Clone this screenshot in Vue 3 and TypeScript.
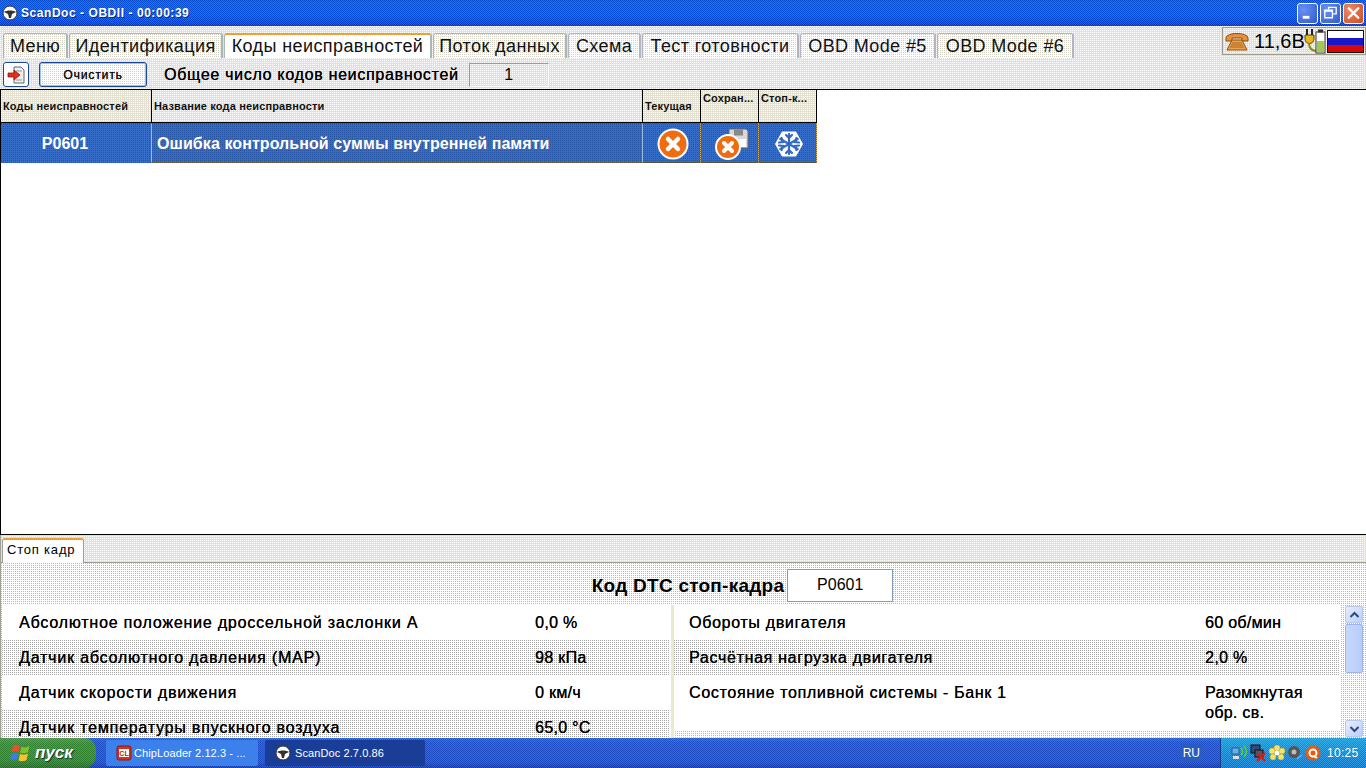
<script setup lang="ts">
type Param = { name: string; value: string }

const tabs = ['Меню', 'Идентификация', 'Коды неисправностей', 'Поток данных', 'Схема', 'Тест готовности', 'OBD Mode #5', 'OBD Mode #6']
const tabWidths = [65, 154, 208, 134, 73, 157, 136, 137]

const leftParams: Param[] = [
  { name: 'Абсолютное положение дроссельной заслонки А', value: '0,0 %' },
  { name: 'Датчик абсолютного давления (MAP)', value: '98 кПа' },
  { name: 'Датчик скорости движения', value: '0 км/ч' },
  { name: 'Датчик температуры впускного воздуха', value: '65,0 °C' }
]
const rightParams: Param[] = [
  { name: 'Обороты двигателя', value: '60 об/мин' },
  { name: 'Расчётная нагрузка двигателя', value: '2,0 %' },
  { name: 'Состояние топливной системы - Банк 1', value: 'Разомкнутая обр. св.' }
]
</script>

<template>
  <div class="screen">
    <header class="titlebar">
      <div class="title">
        <svg class="wheel" width="16" height="16" viewBox="0 0 16 16">
          <circle cx="8" cy="8" r="7" fill="#fff" stroke="#333" />
          <path d="M2 7 C5 5 11 5 14 7 L10 9 L9 13 H7 L6 9 Z" fill="#333" />
        </svg>
        <span>ScanDoc - OBDII - 00:00:39</span>
      </div>
      <div class="winbtns">
        <span class="winbtn"><svg width="20" height="20" viewBox="0 0 20 20"><rect x="5" y="13" width="7" height="3" fill="#fff" /></svg></span>
        <span class="winbtn"><svg width="20" height="20" viewBox="0 0 20 20"><path d="M8 6V4h8v7h-3M4 7h8v8H4zM4 8h8" fill="none" stroke="#fff" stroke-width="1.4" /></svg></span>
        <span class="winbtn close"><svg width="20" height="20" viewBox="0 0 20 20"><path d="M5 5l10 10M15 5L5 15" stroke="#fff" stroke-width="2.6" stroke-linecap="round" /></svg></span>
      </div>
    </header>

    <main class="window tan">
      <div class="tabrow">
        <nav class="tabs">
          <div
            v-for="(tab, i) in tabs"
            :key="tab"
            class="tab"
            :class="{ active: i === 2, grey: i >= 4 }"
            :style="{ width: tabWidths[i] + 'px' }"
          >{{ tab }}</div>
        </nav>
        <div class="status">
          <svg width="24" height="20" viewBox="0 0 24 20">
            <path d="M1 7C1 1 23 1 23 7v3h-6V7H7v3H1Z" fill="#e8923a" stroke="#8a4f10" />
            <path d="M7 9h10l5 10H2Z" fill="#f0a24a" stroke="#8a4f10" />
            <path d="M7 12h10M6 14h12M5 16h14" stroke="#a8641c" />
          </svg>
          <span class="volt">11,6В</span>
          <svg class="plug" width="22" height="26" viewBox="0 0 22 26">
            <path d="M3 1v6M8 1v6" stroke="#222" stroke-width="2" />
            <path d="M1 7h9v4a4 4 0 0 1-9 0Z" fill="#e8b820" stroke="#5a4500" />
            <path d="M5 15c0 6 3 8 8 8" fill="none" stroke="#8a8a10" stroke-width="2" />
            <rect x="12" y="4" width="9" height="21" fill="#fff" stroke="#333" />
            <rect x="14" y="1.500" width="5" height="3" fill="#333" />
            <rect x="13" y="13" width="7" height="11" fill="#9ccc4a" />
          </svg>
          <div class="flag"><i class="w"></i><i class="b"></i><i class="r"></i></div>
        </div>
      </div>

      <div class="toolbar">
        <button class="iconbtn">
          <svg width="20" height="20" viewBox="0 0 20 20">
            <path d="M8 2h7l3 3v13H8Z" fill="#eee" stroke="#666" />
            <path d="M10 6h6M10 15h6" stroke="#999" />
            <path d="M2 8h6V5l6 5-6 5v-3H2Z" fill="#e0301e" stroke="#801008" stroke-width=".7" />
          </svg>
        </button>
        <button class="clear">Очистить</button>
        <span class="count-label">Общее число кодов неисправностей</span>
        <span class="count">1</span>
      </div>

      <section class="table-area">
        <div class="dtc-table">
          <div class="th tan">Коды неисправностей</div>
          <div class="th tan">Название кода неисправности</div>
          <div class="th tan">Текущая</div>
          <div class="th tan top">Сохран...</div>
          <div class="th tan top">Стоп-к...</div>

          <div class="td sel center code">P0601</div>
          <div class="td sel name">Ошибка контрольной суммы внутренней памяти</div>
          <div class="td sel center dotted">
            <svg width="32" height="32" viewBox="0 0 32 32">
              <circle cx="16" cy="16" r="14.500" fill="#ef6c10" stroke="#fff" stroke-width="2" />
              <path d="M11 11l10 10M21 11L11 21" stroke="#fff" stroke-width="4.500" stroke-linecap="round" />
            </svg>
          </div>
          <div class="td sel center dotted save">
            <svg width="34" height="32" viewBox="0 0 34 32">
              <path d="M14 1h17l2 2v17H14Z" fill="#d8d8d8" stroke="#666" />
              <rect x="19" y="1.500" width="9" height="6" fill="#888" />
              <rect x="18" y="11" width="13" height="8" fill="#fff" />
              <circle cx="13" cy="19" r="12" fill="#ef6c10" stroke="#fff" stroke-width="2" />
              <path d="M9 15l8 8M17 15l-8 8" stroke="#fff" stroke-width="4" stroke-linecap="round" />
            </svg>
          </div>
          <div class="td sel center dotted">
            <svg width="30" height="28" viewBox="0 0 30 28">
              <path d="M8 1.500h14L29 14l-7 12.500H8L1 14Z" fill="#fff" />
              <g stroke="#316ac5" stroke-width="2.200" stroke-linecap="round" fill="none">
                <path d="M15 4v20M6.300 9l17.400 10M23.700 9L6.300 19" />
                <path d="M12 5l3 3 3-3M12 23l3-3 3 3M5 12.500l4-.5-1.500-4M25 12.500l-4-.5 1.500-4M5 15.500l4 .5-1.500 4M25 15.500l-4 .5 1.500 4" />
              </g>
            </svg>
          </div>
        </div>
      </section>

      <div class="bottom-tabs">
        <div class="stop-tab">Стоп кадр</div>
      </div>

      <section class="panel">
        <div class="dtc-line">
          <span>Код DTC стоп-кадра</span>
          <span class="dtc-box">P0601</span>
        </div>
        <div class="params">
          <div class="col">
            <div v-for="(p, i) in leftParams" :key="p.name" class="param" :class="{ alt: i % 2 === 1 }">
              <span class="p-name">{{ p.name }}</span>
              <span class="p-val">{{ p.value }}</span>
            </div>
          </div>
          <div class="col right">
            <div v-for="(p, i) in rightParams" :key="p.name" class="param" :class="{ alt: i % 2 === 1 }">
              <span class="p-name">{{ p.name }}</span>
              <span class="p-val">{{ p.value }}</span>
            </div>
          </div>
          <div class="scrollbar">
            <span class="sb-btn"><svg width="11" height="8" viewBox="0 0 11 8"><path d="M1.500 6l4-4 4 4" fill="none" stroke="#2a4a80" stroke-width="2" /></svg></span>
            <span class="sb-thumb"></span>
            <span class="sb-btn end"><svg width="11" height="8" viewBox="0 0 11 8"><path d="M1.500 2l4 4 4-4" fill="none" stroke="#2a4a80" stroke-width="2" /></svg></span>
          </div>
        </div>
      </section>
    </main>

    <footer class="taskbar">
      <div class="start">
        <svg width="22" height="20" viewBox="0 0 22 20">
          <path d="M3 3c3-2 5-1 7 0l-1.500 6c-2-1-4-1-7 0Z" fill="#e8502a" />
          <path d="M11.500 3.500c3 1.500 5 1 8-.5l-1.500 6c-3 1.500-5 1.500-8 .5Z" fill="#7cc230" />
          <path d="M1.500 10.500c3-1 5-1 7 0L7 17c-2-1-4-1-7 0Z" fill="#3a7ce8" />
          <path d="M10 11c3 1 5 1 8-.5L16.500 17c-3 1.500-5 1.500-8 .5Z" fill="#f4c430" />
        </svg>
        <span>пуск</span>
      </div>
      <div class="task">
        <svg width="16" height="18" viewBox="0 0 16 18">
          <rect x="1" y="2" width="14" height="14" rx="2" fill="#d83020" stroke="#901808" />
          <rect x="3" y="5" width="10" height="8" fill="#fff" />
          <text x="8" y="12" text-anchor="middle" class="cl">CL</text>
        </svg>
        <span>ChipLoader 2.12.3 - ...</span>
      </div>
      <div class="task current">
        <svg width="16" height="16" viewBox="0 0 16 16">
          <circle cx="8" cy="8" r="7" fill="#fff" stroke="#333" />
          <path d="M2 7 C5 5 11 5 14 7 L10 9 L9 13 H7 L6 9 Z" fill="#333" />
        </svg>
        <span>ScanDoc 2.7.0.86</span>
      </div>
      <span class="lang">RU</span>
      <div class="tray">
        <svg width="16" height="16" viewBox="0 0 16 16">
          <rect x="1" y="3" width="7" height="6" fill="#6ab0e8" stroke="#2a5a90" />
          <rect x="2" y="11" width="6" height="3" fill="#ddd" />
          <path d="M10 3c2 2 2 5 0 7M13 1c3 3 3 8 0 11" fill="none" stroke="#5fd030" stroke-width="1.500" />
        </svg>
        <svg width="18" height="18" viewBox="0 0 18 18">
          <rect x="2" y="1" width="9" height="8" fill="#334a80" stroke="#111" />
          <rect x="6" y="6" width="8" height="7" fill="#556" stroke="#111" />
          <path d="M8 9l8 8M16 9l-8 8" stroke="#e01818" stroke-width="2.200" />
        </svg>
        <svg width="16" height="16" viewBox="0 0 16 16">
          <g fill="#f6e26a" stroke="#c8a020" stroke-width=".5">
            <circle cx="8" cy="3" r="3" /><circle cx="13" cy="6" r="3" /><circle cx="12" cy="12" r="3" />
            <circle cx="4" cy="12" r="3" /><circle cx="3" cy="6" r="3" />
          </g>
          <circle cx="8" cy="8" r="2.500" fill="#fff" />
        </svg>
        <svg width="16" height="16" viewBox="0 0 16 16">
          <circle cx="7" cy="7" r="6" fill="#555" />
          <circle cx="7" cy="7" r="2.500" fill="#bbb" />
          <path d="M10 14l5-4" stroke="#88a0e8" stroke-width="1.500" />
        </svg>
        <svg width="16" height="16" viewBox="0 0 16 16">
          <circle cx="8" cy="8" r="7.500" fill="#e85a10" />
          <circle cx="8" cy="8" r="3.500" fill="none" stroke="#fff" stroke-width="2" />
          <path d="M9 11l3 2" stroke="#fff" stroke-width="2" />
        </svg>
        <span class="clock">10:25</span>
      </div>
    </footer>
  </div>
</template>

<style>
html, body {
  margin: 0;
  overflow: hidden;
}
</style>

<style scoped>
.screen {
  width: 1366px;
  height: 768px;
  display: flex;
  flex-direction: column;
  overflow: hidden;
  font-family: "Liberation Sans", Arial, sans-serif;
  color: #000;
}

/* the reference is a 256 colour capture, so surfaces are dithered: one dot per 2x2 tile */
.tan,
.tab,
.clear,
.panel,
.param.alt,
.sel {
  background-color: var(--dot);
  background-image:
    linear-gradient(90deg, transparent 50%, var(--fill) 50%),
    linear-gradient(transparent 50%, var(--fill) 50%);
  background-size: 2px 2px;
}

.tan {
  --dot: #fff;
  --fill: #e4e1d2;
}

.titlebar {
  height: 26px;
  flex: none;
  display: flex;
  justify-content: space-between;
  align-items: center;
  padding: 0 2px;
  box-sizing: border-box;
  background:
    repeating-conic-gradient(rgba(255, 255, 255, 0.13) 0 25%, rgba(0, 0, 40, 0.1) 0 50%) 0 0 / 2px 2px,
    linear-gradient(#0a50d8 0, #0a5ae8 8%, #0458ee 60%, #0444dc 92%, #0038b8 100%);
}

.title {
  display: flex;
  align-items: center;
  gap: 3px;
  color: #fff;
  font-size: 12px;
  font-weight: bold;
  letter-spacing: 0.55px;
  text-shadow: 1px 1px 0 #0a2a90;
}

.wheel {
  flex: none;
}

.winbtns {
  display: flex;
  gap: 2px;
}

.winbtn {
  width: 21px;
  height: 21px;
  box-sizing: border-box;
  border: 1px solid #fff;
  border-radius: 3px;
  background: radial-gradient(circle at 30% 30%, #6a92f0, #2f58d0);
  display: flex;
  align-items: center;
  justify-content: center;
}

.winbtn.close {
  background: radial-gradient(circle at 30% 30%, #ee8a68, #d04a1c);
}

.window {
  flex: 1;
  min-height: 0;
  display: flex;
  flex-direction: column;
  overflow: hidden;
}

.tabrow {
  height: 34px;
  flex: none;
  display: flex;
  justify-content: space-between;
  padding: 1px 0 0 3px;
  box-sizing: border-box;
}

.tabs {
  display: flex;
  margin-top: 6px;
}

.tab {
  --dot: #d4d2c6;
  --fill: #fff;
  height: 25px;
  box-sizing: border-box;
  flex: none;
  margin-right: 1px;
  padding-top: 1px;
  border: 1px solid #a9b7b4;
  border-bottom: 0;
  border-right-width: 2px;
  border-radius: 3px 3px 0 0;
  font-size: 18px;
  line-height: 22px;
  letter-spacing: 0.4px;
  text-align: center;
  white-space: nowrap;
  color: #111;
}

.tab.grey {
  border-color: #b4b4c2;
}

.tab.active {
  background: #fff;
  border-top: 2px solid #f0a030;
  padding-top: 0;
}

.status {
  width: 144px;
  height: 28px;
  box-sizing: border-box;
  border: 1px solid #a09c8c;
  display: flex;
  align-items: center;
  padding-left: 2px;
}

.volt {
  font-size: 20px;
  margin-left: 5px;
  width: 52px;
  white-space: nowrap;
}

.plug {
  flex: none;
  margin-left: -2px;
  margin-right: 1px;
}

.flag {
  width: 37px;
  height: 23px;
  box-sizing: border-box;
  border: 1px solid #111;
  display: flex;
  flex-direction: column;
  flex: none;
}

.flag i {
  flex: 1;
}

.flag .w { background: #fff; }
.flag .b { background: #1818c8; }
.flag .r { background: #d80808; }

.toolbar {
  height: 29px;
  flex: none;
  display: flex;
  align-items: center;
  padding-left: 3px;
  box-sizing: border-box;
}

.iconbtn {
  width: 26px;
  height: 25px;
  padding: 0;
  box-sizing: border-box;
  border: 1px solid #1c4a90;
  border-radius: 3px;
  background: #fff;
  display: flex;
  align-items: center;
  justify-content: center;
}

.clear {
  --dot: #d4d2c4;
  --fill: #fff;
  width: 108px;
  height: 25px;
  margin-left: 10px;
  box-sizing: border-box;
  border: 1px solid #1c4a90;
  border-radius: 3px;
  box-shadow: inset 0 0 0 1px #9cc0ee;
  font: 12px "Liberation Sans", Arial, sans-serif;
  letter-spacing: 0.9px;
  color: #111;
  text-shadow: 0.3px 0 0 #111;
}

.count-label {
  margin-left: 17px;
  font-size: 16px;
  white-space: nowrap;
  letter-spacing: 0.7px;
  text-shadow: 0.2px 0 0 #111;
}

.count {
  width: 80px;
  height: 24px;
  margin-left: 10px;
  box-sizing: border-box;
  border: 1px solid #9c9a8c;
  border-right-color: #fff;
  border-bottom-color: #fff;
  text-align: center;
  font-size: 16px;
  line-height: 21px;
}

.table-area {
  height: 446px;
  flex: none;
  box-sizing: border-box;
  background: #fff;
  border-top: 1px solid #000;
  border-bottom: 1px solid #000;
  border-left: 1px solid #000;
}

.dtc-table {
  width: 816px;
  display: grid;
  grid-template-columns: 151px 491px 58px 58px 58px;
  grid-template-rows: 33px 40px;
}

.th {
  box-sizing: border-box;
  border-right: 1px solid #000;
  border-bottom: 1px solid #000;
  font-size: 11px;
  font-weight: bold;
  line-height: 33px;
  letter-spacing: 0.15px;
  padding-left: 2px;
  white-space: nowrap;
  overflow: hidden;
  color: #111;
}

.th.top {
  line-height: 14px;
  padding-top: 1px;
}

.td {
  box-sizing: border-box;
  height: 40px;
  padding-top: 1px;
  color: #fff;
  font-size: 16px;
  font-weight: bold;
  display: flex;
  align-items: center;
  border-right: 1px solid #9fb8dc;
  border-top: 1px dotted #553;
  border-bottom: 1px dotted #553;
}

.sel {
  --dot: #2654a4;
  --fill: #356cc8;
}

.center {
  justify-content: center;
}

.code {
  padding-right: 22px;
}

.name {
  padding-left: 5px;
  letter-spacing: 0.08px;
  white-space: nowrap;
}

.dotted {
  padding-left: 2px;
  border-right: 1px dotted #e0b060;
}

.save {
  padding-left: 5px;
}

.bottom-tabs {
  height: 28px;
  flex: none;
  display: flex;
  align-items: flex-end;
  padding-left: 1px;
  box-sizing: border-box;
  border-bottom: 1px solid #a0a096;
  border-left: 1px solid #a0a096;
}

.stop-tab {
  width: 82px;
  height: 25px;
  margin-bottom: -1px;
  box-sizing: border-box;
  background: #fff;
  border: 1px solid #a0a096;
  border-top: 2px solid #f0a030;
  border-bottom: 0;
  border-radius: 3px 3px 0 0;
  font-size: 13px;
  line-height: 20px;
  padding-left: 4px;
  letter-spacing: 0.8px;
}

.panel {
  --dot: #bcb9a6;
  --fill: #fff;
  flex: 1;
  min-height: 0;
  display: flex;
  flex-direction: column;
  overflow: hidden;
  border-left: 1px solid #a0a096;
}

.dtc-line {
  height: 42px;
  flex: none;
  display: flex;
  justify-content: center;
  align-items: flex-start;
  gap: 3px;
  padding: 6px 0 0 118px;
  box-sizing: border-box;
  font-size: 19px;
  font-weight: bold;
  line-height: 33px;
  letter-spacing: 0.25px;
}

.dtc-box {
  width: 106px;
  height: 33px;
  box-sizing: border-box;
  border: 1px solid #7f9db9;
  background: #fff;
  font-size: 16px;
  font-weight: normal;
  line-height: 29px;
  text-align: center;
  letter-spacing: 0;
}

.params {
  flex: 1;
  min-height: 0;
  display: flex;
  padding-left: 1px;
  overflow: hidden;
}

.col {
  width: 668px;
  flex: none;
}

.col.right {
  width: 666px;
  margin-left: 1px;
  border-left: 3px solid #ece8cc;
}

.param {
  min-height: 35px;
  display: flex;
  background: #fff;
  font-size: 16px;
  line-height: 20px;
  padding: 8px 0 7px 17px;
  box-sizing: border-box;
  letter-spacing: 0.8px;
  text-shadow: 0.2px 0 0 #111;
}

.col.right .param {
  padding-left: 15px;
  letter-spacing: 0.68px;
}

.param.alt {
  --dot: #a6a6a6;
  --fill: #fff;
}

.p-name {
  width: 516px;
  flex: none;
  white-space: nowrap;
}

.p-val,
.col.right .p-val {
  width: 112px;
  letter-spacing: 0.3px;
}

.scrollbar {
  width: 18px;
  margin-left: 5px;
  margin-right: 2px;
  padding-top: 1px;
  display: flex;
  flex-direction: column;
  gap: 1px;
  height: 133px;
}

.sb-btn {
  height: 17px;
  flex: none;
  box-sizing: border-box;
  border: 1px solid #b8c8ee;
  border-radius: 2px;
  background: linear-gradient(135deg, #e6eefe, #bccdf8);
  display: flex;
  align-items: center;
  justify-content: center;
}

.sb-btn.end {
  margin-top: auto;
  margin-bottom: 2px;
}

.sb-thumb {
  height: 49px;
  flex: none;
  box-sizing: border-box;
  border: 1px solid #a0b4e8;
  border-radius: 2px;
  background: linear-gradient(90deg, #c8d8fc, #b8ccf8);
}

.taskbar {
  height: 30px;
  flex: none;
  display: flex;
  align-items: stretch;
  color: #fff;
  background:
    repeating-conic-gradient(rgba(255, 255, 255, 0.1) 0 25%, rgba(0, 0, 60, 0.1) 0 50%) 0 0 / 2px 2px,
    linear-gradient(#2a68e0 0, #2458d8 15%, #2054d0 80%, #1840b0 100%);
}

.start {
  width: 96px;
  flex: none;
  display: flex;
  align-items: center;
  gap: 3px;
  padding-left: 10px;
  box-sizing: border-box;
  border-radius: 0 12px 12px 0;
  background:
    repeating-conic-gradient(rgba(255, 255, 255, 0.12) 0 25%, rgba(0, 40, 0, 0.12) 0 50%) 0 0 / 2px 2px,
    linear-gradient(#4f9a50 0, #389038 20%, #348a34 75%, #2a6e30 100%);
  font-size: 17px;
  font-weight: bold;
  font-style: italic;
  text-shadow: 1px 1px 1px #133;
}

.task {
  width: 152px;
  flex: none;
  margin: 2px 0 2px 10px;
  display: flex;
  align-items: center;
  gap: 2px;
  padding-left: 10px;
  box-sizing: border-box;
  border-radius: 2px;
  font-size: 11px;
  letter-spacing: 0.1px;
  white-space: nowrap;
  background: #3c80ec;
}

.task.current {
  width: 160px;
  margin-left: 7px;
  gap: 4px;
  background: #1a3e98;
}

.lang {
  margin-left: auto;
  margin-right: 18px;
  align-self: center;
  padding: 2px;
  font-size: 12px;
  background: #2a5cc0;
}

.tray {
  width: 146px;
  flex: none;
  display: flex;
  align-items: center;
  gap: 2px;
  padding-left: 10px;
  box-sizing: border-box;
  border-left: 1px solid #10408c;
  background:
    repeating-conic-gradient(rgba(255, 255, 255, 0.14) 0 25%, rgba(0, 0, 60, 0.1) 0 50%) 0 0 / 2px 2px,
    linear-gradient(#18a8e8 0, #1090e0 50%, #0c80d8 100%);
}

.clock {
  margin-left: 4px;
  font-size: 12px;
  letter-spacing: 0.3px;
}

.cl {
  font: bold 7px "Liberation Sans", Arial, sans-serif;
  fill: #c01808;
}
</style>
